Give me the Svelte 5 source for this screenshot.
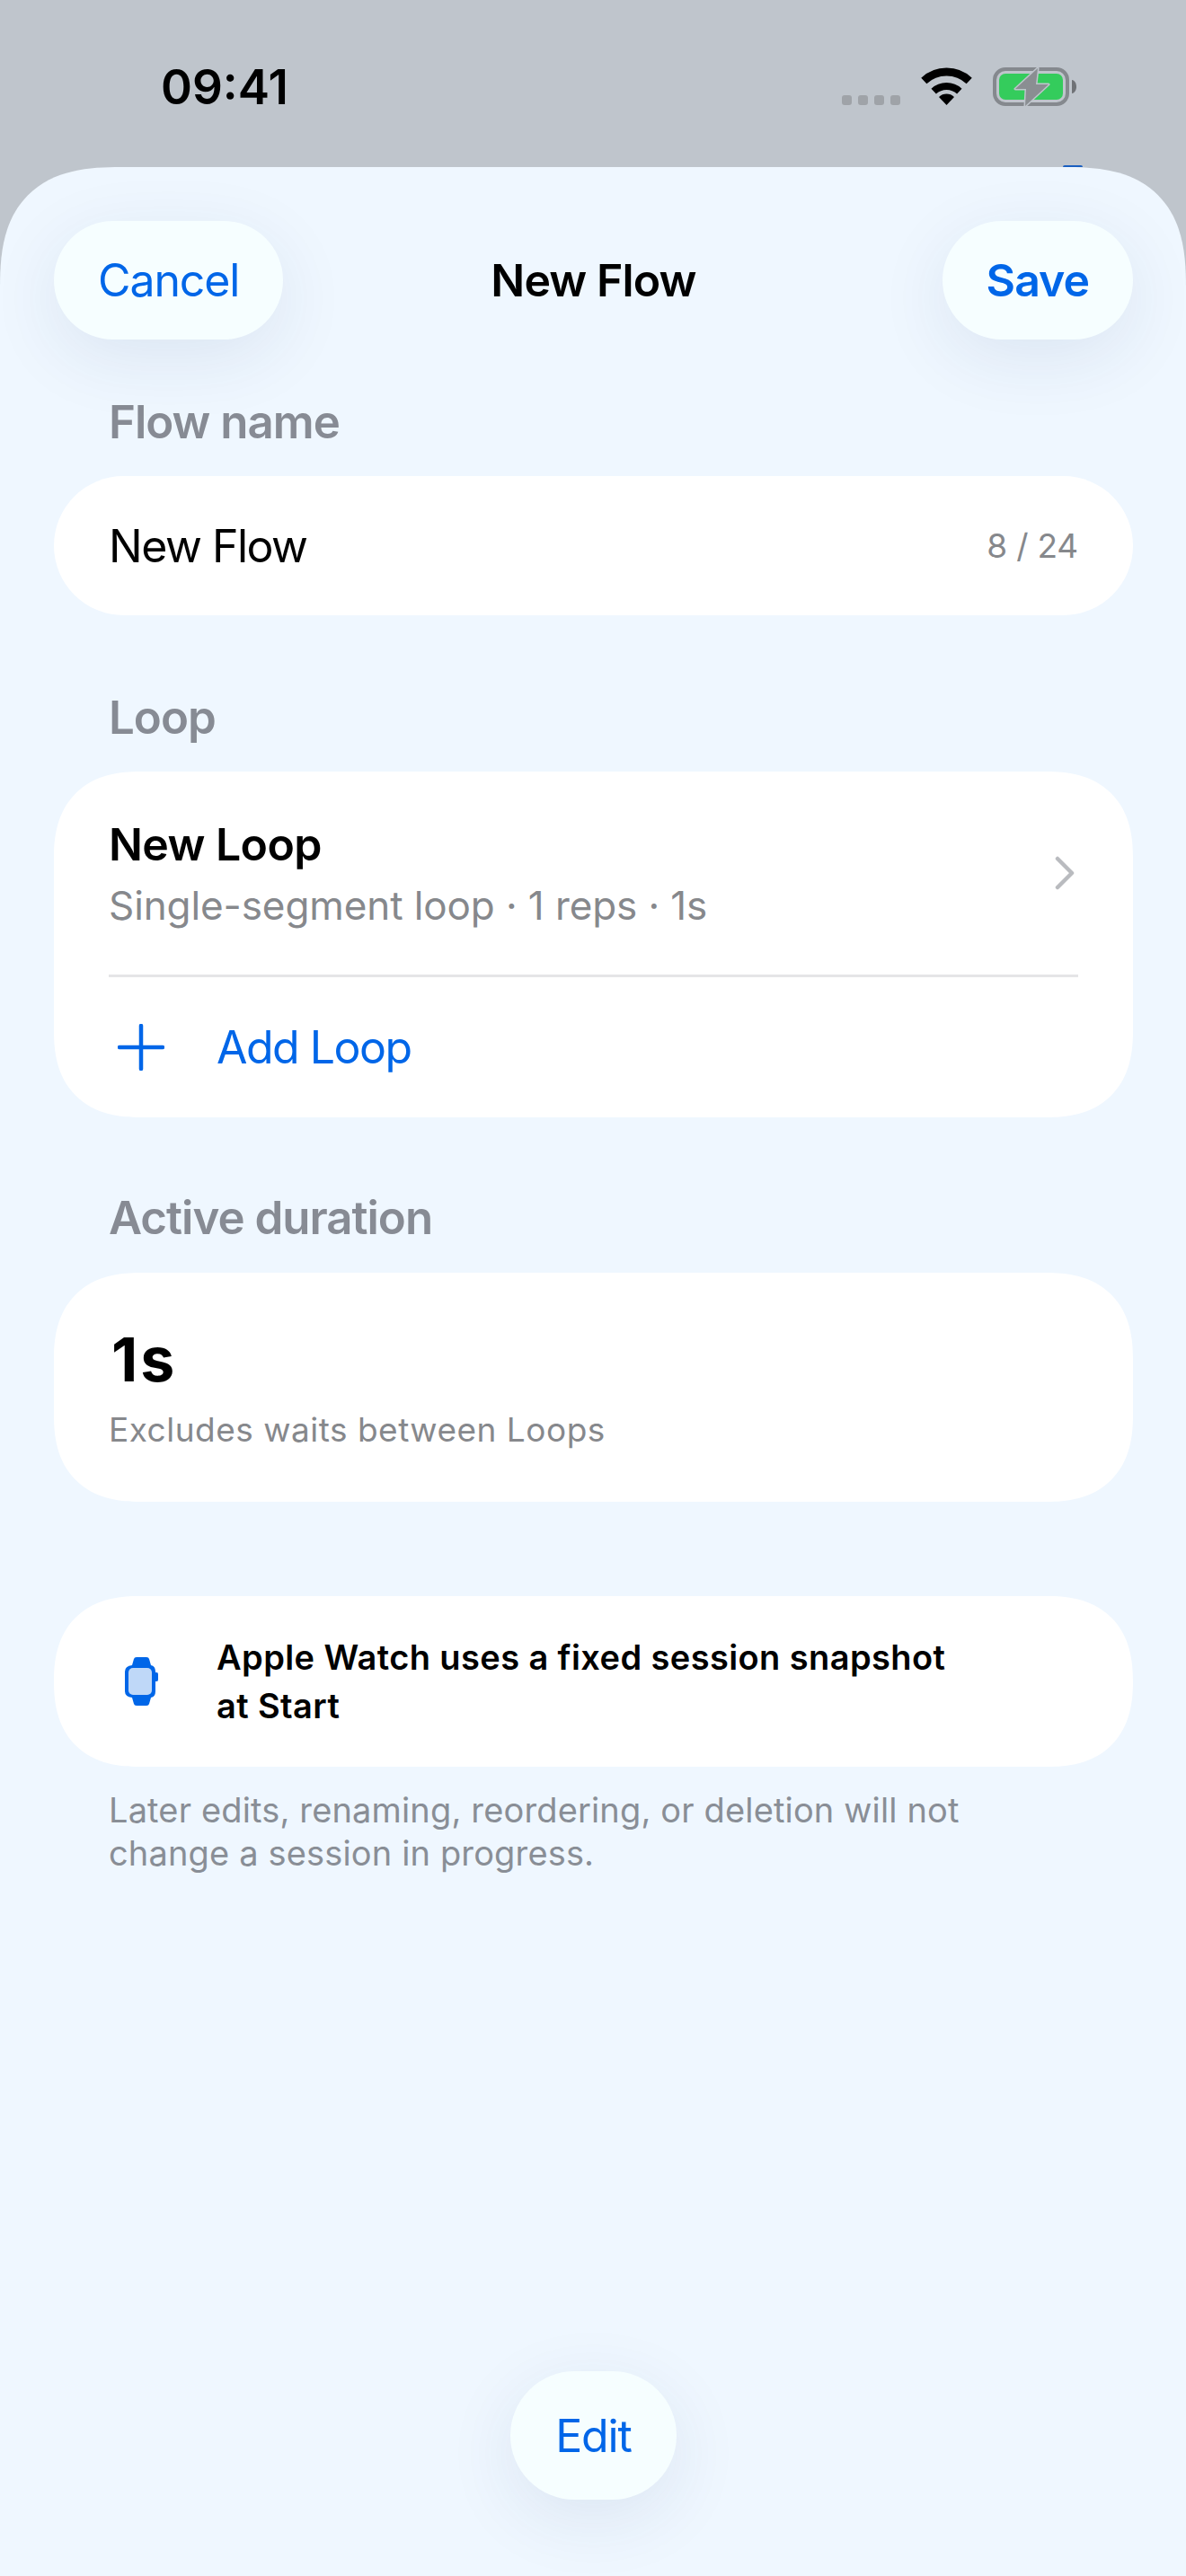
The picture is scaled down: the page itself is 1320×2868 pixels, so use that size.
<script>
  const name = 'New Flow';
  const maxLength = 24;
</script>

<div class="screen">
  <header class="status">
    <span class="time">09:41</span>
    <div class="status-icons">
      <div class="signal"><i></i><i></i><i></i><i></i></div>
      <svg class="wifi" width="57" height="42" viewBox="0 0 57 42">
        <path d="M3.3 15A37 37 0 0 1 53.7 15" fill="none" stroke="#000" stroke-width="9" />
        <path d="M14.2 26.6A21 21 0 0 1 42.8 26.6" fill="none" stroke="#000" stroke-width="8" />
        <path d="M28.5 42L20 32.9A12.5 12.5 0 0 1 37 32.9Z" fill="#000" />
      </svg>
      <svg class="battery" width="94" height="44" viewBox="0 0 94 44">
        <rect x="2" y="2" width="81" height="39" rx="12" fill="none" stroke="#85898e" stroke-width="4" />
        <rect x="7" y="7" width="71" height="29" rx="7" fill="#34cc5c" />
        <path d="M88 14c3 .5 5 3.500 5 7.500s-2 7-5 7.500z" fill="#6f7276" />
        <path d="M50 1L25 24H37L36 43L62 19H48Z" fill="#8a8e92" stroke="#bfc5cc" stroke-width="3" stroke-linejoin="round" paint-order="stroke" />
      </svg>
    </div>
  </header>

  <main class="sheet">
    <span class="peek"></span>
    <nav class="nav">
      <button class="pill">Cancel</button>
      <h1>New Flow</h1>
      <button class="pill strong">Save</button>
    </nav>

    <h2 class="label first">Flow name</h2>
    <div class="card field">
      <span>{name}</span>
      <span class="count">{name.length} / {maxLength}</span>
    </div>

    <h2 class="label">Loop</h2>
    <div class="card loops">
      <div class="loop-row">
        <div>
          <div class="loop-name">New Loop</div>
          <div class="loop-meta">Single-segment loop · 1 reps · 1s</div>
        </div>
        <svg width="24" height="38" viewBox="0 0 24 38">
          <path d="M4 3L20 19L4 35" fill="none" stroke="#b9bbbf" stroke-width="4.500" stroke-linecap="round" stroke-linejoin="round" />
        </svg>
      </div>
      <div class="add-row">
        <svg width="52" height="52" viewBox="0 0 52 52">
          <path d="M26 2V50M2 26H50" fill="none" stroke="#0066e8" stroke-width="4.500" stroke-linecap="round" />
        </svg>
        <span>Add Loop</span>
      </div>
    </div>

    <h2 class="label second">Active duration</h2>
    <div class="card duration">
      <div class="total">1s</div>
      <div class="note">Excludes waits between Loops</div>
    </div>

    <div class="card watch">
      <svg width="37" height="54" viewBox="0 0 37 54">
        <path d="M8 9L10 2Q10.500 0 13 0H24Q26.500 0 27 2L29 9Q34 10 34 16V17H35.500Q37 17 37 19V25Q37 27 35.500 27H34V38Q34 44 29 45L27 52Q26.500 54 24 54H13Q10.500 54 10 52L8 45Q0 44 0 38V16Q0 10 8 9Z" fill="#0066e8" />
        <rect x="4" y="12" width="26" height="30" rx="5" fill="#bfd8f8" />
      </svg>
      <p>Apple Watch uses a fixed session snapshot<br />at Start</p>
    </div>
    <p class="foot">Later edits, renaming, reordering, or deletion will not<br />change a session in progress.</p>

    <div class="bottom">
      <button class="pill edit">Edit</button>
    </div>
  </main>
</div>

<style>
  :global(body) {
    margin: 0;
    background: #bfc5cc;
  }
  .screen {
    width: 1320px;
    height: 2868px;
    display: flex;
    flex-direction: column;
    overflow: hidden;
    font-family: Inter, "Liberation Sans", sans-serif;
    color: #000;
  }
  .status {
    height: 186px;
    flex: none;
    display: flex;
    justify-content: space-between;
    align-items: flex-start;
    padding: 75px 121px 0 179px;
    box-sizing: border-box;
  }
  .time {
    font-size: 53px;
    line-height: 45px;
    font-weight: 600;
  }
  .status-icons {
    display: flex;
    align-items: flex-start;
    gap: 23px;
  }
  .signal {
    display: flex;
    gap: 7px;
    margin-top: 31px;
  }
  .signal i {
    width: 11px;
    height: 11px;
    border-radius: 3px;
    background: #9fa3a8;
  }
  .sheet {
    position: relative;
    flex: 1;
    display: flex;
    flex-direction: column;
    padding: 60px 59px 0 60px;
    background: #eff7ff;
    border-radius: 135px 135px 0 0;
    corner-shape: superellipse(1.4);
  }
  .peek {
    position: absolute;
    top: -2px;
    right: 115px;
    width: 22px;
    height: 2px;
    border-radius: 2px 2px 0 0;
    background: #1a5fc0;
  }
  .nav {
    height: 132px;
    display: flex;
    align-items: center;
    justify-content: space-between;
    position: relative;
  }
  .nav h1 {
    position: absolute;
    left: 0;
    right: 0;
    margin: 0;
    text-align: center;
    font-size: 50px;
    font-weight: 600;
    letter-spacing: -0.9px;
    pointer-events: none;
  }
  .pill {
    height: 132px;
    padding: 0 49px;
    border: 0;
    border-radius: 66px;
    background: #f6feff;
    color: #0066e8;
    font: inherit;
    font-size: 50px;
    letter-spacing: -1.1px;
    box-shadow: 0 20px 80px rgba(30, 60, 110, 0.09);
    position: relative;
    z-index: 1;
  }
  .strong {
    font-weight: 600;
    letter-spacing: -1px;
  }
  .label {
    margin: 85px 61px 31px;
    font-size: 51px;
    line-height: 58px;
    font-weight: 600;
    letter-spacing: -1px;
    color: #878b94;
  }
  .label.first {
    margin-top: 63px;
  }
  .label.second {
    margin-top: 83px;
    margin-bottom: 32px;
  }
  .card {
    background: #fff;
    border-radius: 96px;
    corner-shape: superellipse(1.25);
  }
  .field {
    height: 155px;
    display: flex;
    align-items: center;
    justify-content: space-between;
    padding: 0 61px;
    font-size: 50px;
    letter-spacing: -1.5px;
    border-radius: 78px;
    corner-shape: round;
  }
  .count {
    font-size: 37px;
    letter-spacing: -0.2px;
    color: #86888c;
  }
  .loops {
    height: 385px;
    padding: 0 61px;
    box-sizing: border-box;
  }
  .loop-row {
    height: 229px;
    box-sizing: border-box;
    padding-top: 50px;
    display: flex;
    justify-content: space-between;
    align-items: flex-start;
    border-bottom: 3px solid #e5e5e7;
  }
  .loop-row svg {
    margin: 44px 3px 0 0;
  }
  .loop-name {
    font-size: 50px;
    line-height: 62px;
    font-weight: 600;
    letter-spacing: -0.6px;
  }
  .loop-meta {
    margin-top: 10px;
    font-size: 44px;
    line-height: 54px;
    letter-spacing: -0.1px;
    color: #86888c;
  }
  .add-row {
    display: flex;
    align-items: center;
    gap: 58px;
    height: 156px;
    padding-left: 10px;
    font-size: 50px;
    letter-spacing: -1.5px;
    color: #0066e8;
  }
  .duration {
    height: 255px;
    padding: 53px 61px 0;
    box-sizing: border-box;
  }
  .total {
    font-size: 68px;
    line-height: 86px;
    font-weight: 700;
    letter-spacing: 3px;
    margin-left: 3px;
  }
  .note {
    margin-top: 12px;
    font-size: 37px;
    line-height: 48px;
    letter-spacing: 0.5px;
    color: #86888c;
  }
  .watch {
    height: 190px;
    margin-top: 105px;
    display: flex;
    align-items: center;
    gap: 65px;
    padding-left: 79px;
  }
  .watch p {
    margin: 0;
    font-size: 38px;
    line-height: 54px;
    font-weight: 600;
    letter-spacing: 0.4px;
  }
  .foot {
    margin: 24px 61px 0;
    font-size: 38px;
    line-height: 48px;
    letter-spacing: 0.15px;
    color: #898e96;
  }
  .bottom {
    margin-top: auto;
    display: flex;
    justify-content: center;
    padding-bottom: 85px;
  }
  .edit {
    height: 143px;
    padding: 0 50px;
    border-radius: 72px;
  }
</style>
